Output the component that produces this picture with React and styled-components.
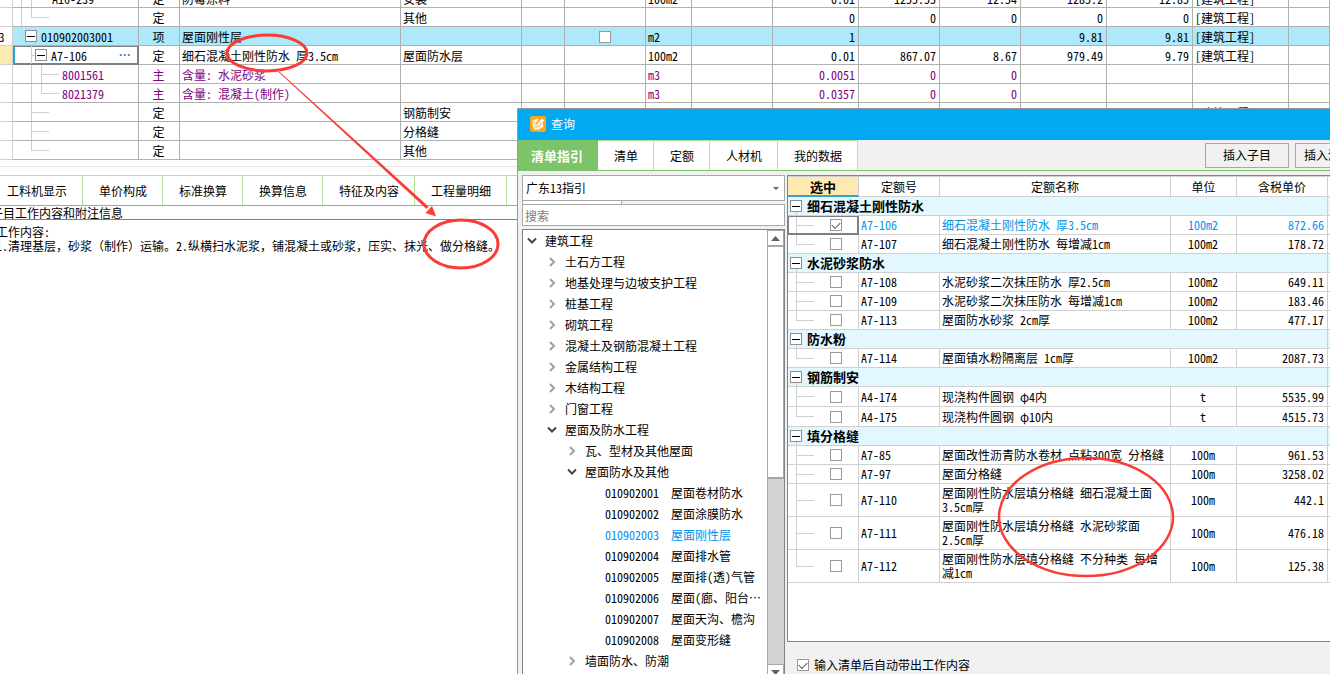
import React from "react";
import styled, { createGlobalStyle, css } from "styled-components";

const estimateColumns = [22, 126, 41, 221, 121, 43, 81, 46, 81, 86, 81, 81, 86, 86, 96];

const estimateRows = [
  {
    guides: ["line", "branch"],
    code: "A16-239",
    type: "定",
    name: "防霉涂料",
    spec: "安装",
    unit: "100m2",
    values: ["0.01", "1255.55", "12.54", "1285.2", "12.85"],
    major: "[建筑工程]",
  },
  {
    guides: ["line", "lastBranch"],
    type: "定",
    spec: "其他",
    values: ["0", "0", "0", "0", "0"],
    major: "[建筑工程]",
  },
  {
    num: "3",
    guides: ["lastNode"],
    toggle: true,
    code: "010902003001",
    type: "项",
    name: "屋面刚性层",
    check: true,
    unit: "m2",
    values: ["1", "", "", "9.81", "9.81"],
    major: "[建筑工程]",
    tone: "item",
  },
  {
    guides: ["blank", "node"],
    toggle: true,
    code: "A7-106",
    type: "定",
    name: "细石混凝土刚性防水 厚3.5cm",
    spec: "屋面防水层",
    unit: "100m2",
    values: ["0.01", "867.07", "8.67", "979.49", "9.79"],
    major: "[建筑工程]",
    focused: true,
  },
  {
    guides: ["blank", "line", "branch"],
    code: "8001561",
    type: "主",
    name: "含量: 水泥砂浆",
    unit: "m3",
    values: ["0.0051", "0", "0", "", ""],
    tone: "material",
  },
  {
    guides: ["blank", "line", "lastBranch"],
    code: "8021379",
    type: "主",
    name: "含量: 混凝土(制作)",
    unit: "m3",
    values: ["0.0357", "0", "0", "", ""],
    tone: "material",
  },
  { guides: ["blank", "branch"], type: "定", spec: "钢筋制安", major: "[建筑工程]" },
  { guides: ["blank", "branch"], type: "定", spec: "分格缝" },
  { guides: ["blank", "lastBranch"], type: "定", spec: "其他" },
];

const detailTabs = ["工料机显示", "单价构成", "标准换算", "换算信息", "特征及内容", "工程量明细", ""];

const queryTabs = ["清单指引", "清单", "定额", "人材机", "我的数据"];

const chapters = [
  { depth: 0, state: "open", label: "建筑工程" },
  { depth: 1, state: "closed", label: "土石方工程" },
  { depth: 1, state: "closed", label: "地基处理与边坡支护工程" },
  { depth: 1, state: "closed", label: "桩基工程" },
  { depth: 1, state: "closed", label: "砌筑工程" },
  { depth: 1, state: "closed", label: "混凝土及钢筋混凝土工程" },
  { depth: 1, state: "closed", label: "金属结构工程" },
  { depth: 1, state: "closed", label: "木结构工程" },
  { depth: 1, state: "closed", label: "门窗工程" },
  { depth: 1, state: "open", label: "屋面及防水工程" },
  { depth: 2, state: "closed", label: "瓦、型材及其他屋面" },
  { depth: 2, state: "open", label: "屋面防水及其他" },
  { depth: 3, code: "010902001", label: "屋面卷材防水" },
  { depth: 3, code: "010902002", label: "屋面涂膜防水" },
  { depth: 3, code: "010902003", label: "屋面刚性层", selected: true },
  { depth: 3, code: "010902004", label: "屋面排水管" },
  { depth: 3, code: "010902005", label: "屋面排(透)气管" },
  { depth: 3, code: "010902006", label: "屋面(廊、阳台…" },
  { depth: 3, code: "010902007", label: "屋面天沟、檐沟" },
  { depth: 3, code: "010902008", label: "屋面变形缝" },
  { depth: 2, state: "closed", label: "墙面防水、防潮" },
];

const quotaGroups = [
  {
    title: "细石混凝土刚性防水",
    items: [
      { code: "A7-106", name: "细石混凝土刚性防水 厚3.5cm", unit: "100m2", price: "872.66", picked: true },
      { code: "A7-107", name: "细石混凝土刚性防水 每增减1cm", unit: "100m2", price: "178.72" },
    ],
  },
  {
    title: "水泥砂浆防水",
    items: [
      { code: "A7-108", name: "水泥砂浆二次抹压防水 厚2.5cm", unit: "100m2", price: "649.11" },
      { code: "A7-109", name: "水泥砂浆二次抹压防水 每增减1cm", unit: "100m2", price: "183.46" },
      { code: "A7-113", name: "屋面防水砂浆 2cm厚", unit: "100m2", price: "477.17" },
    ],
  },
  {
    title: "防水粉",
    items: [{ code: "A7-114", name: "屋面镇水粉隔离层 1cm厚", unit: "100m2", price: "2087.73" }],
  },
  {
    title: "钢筋制安",
    items: [
      { code: "A4-174", name: "现浇构件圆钢 φ4内", unit: "t", price: "5535.99", tall: true },
      { code: "A4-175", name: "现浇构件圆钢 φ10内", unit: "t", price: "4515.73", tall: true },
    ],
  },
  {
    title: "填分格缝",
    items: [
      { code: "A7-85", name: "屋面改性沥青防水卷材 点粘300宽 分格缝", unit: "100m", price: "961.53" },
      { code: "A7-97", name: "屋面分格缝", unit: "100m", price: "3258.02" },
      { code: "A7-110", name: "屋面刚性防水层填分格缝 细石混凝土面 3.5cm厚", unit: "100m", price: "442.1" },
      { code: "A7-111", name: "屋面刚性防水层填分格缝 水泥砂浆面 2.5cm厚", unit: "100m", price: "476.18" },
      { code: "A7-112", name: "屋面刚性防水层填分格缝 不分种类 每增减1cm", unit: "100m", price: "125.38" },
    ],
  },
];

const AppIcon = () => (
  <svg width="16" height="16" viewBox="0 0 16 16" aria-hidden="true">
    <rect width="16" height="16" rx="2" fill="#fba51c" />
    <path d="M2 5 7 2.500 9 3.500 5.500 7.500 6 10 9 9.500 12.500 6.500 13.500 10.500 9 13.500 4.500 14 2.500 10z" fill="#fff6e6" />
    <path d="M6.500 8.500 12 2.500 14.500 4.500 9 9.300 6.300 10z" fill="#fff" />
    <path d="M2.500 5.500 5.500 7M9.500 5.500 11.500 7.200M4 10.500c2.500 1 5 .5 7.500-1.500" fill="none" stroke="#f6a63a" strokeWidth=".8" />
  </svg>
);

const Chevron = ({ state }) => (
  <svg width="10" height="10" viewBox="0 0 10 10" fill="none" aria-hidden="true">
    {state === "open" ? (
      <path d="M1 2.500 5 6.500 9 2.500" stroke="#454545" strokeWidth="2" />
    ) : (
      <path d="M3 1 7 5 3 9" stroke="#a0a0a0" strokeWidth="2" />
    )}
  </svg>
);

const Triangle = ({ down, small }) => (
  <svg width={small ? 6 : 9} height={small ? 3 : 5} viewBox="0 0 10 5" preserveAspectRatio="none" aria-hidden="true">
    <path d={down ? "M0 0h10L5 5z" : "M0 5h10L5 0z"} fill="#5c6370" />
  </svg>
);

const EstimateGrid = () => (
  <GridPane>
    <GridTable>
      <colgroup>
        {estimateColumns.map((w, i) => (
          <Col key={i} $w={w} />
        ))}
        <col />
      </colgroup>
      <tbody>
        {estimateRows.map((row, i) => (
          <GridRow key={i} $tone={row.tone}>
            <RowNumber $active={row.focused}>{row.num}</RowNumber>
            <GridCell $focused={row.focused} $flush>
              <CodeLine>
                {row.guides.map((g, n) => (
                  <Guide key={n} $kind={g} />
                ))}
                {row.toggle && <Toggle aria-label="折叠" />}
                <CodeText>{row.code}</CodeText>
                {row.focused && <MoreButton aria-label="更多">···</MoreButton>}
              </CodeLine>
            </GridCell>
            <GridCell $align="center">{row.type}</GridCell>
            <GridCell>{row.name}</GridCell>
            <GridCell>{row.spec}</GridCell>
            <GridCell />
            <GridCell>{row.check && <CheckBox aria-label={row.name} />}</GridCell>
            <GridCell>{row.unit}</GridCell>
            <GridCell />
            {(row.values || ["", "", "", "", ""]).map((v, n) => (
              <GridCell key={n} $align="right">
                {v}
              </GridCell>
            ))}
            <GridCell>{row.major}</GridCell>
            <GridCell />
          </GridRow>
        ))}
      </tbody>
    </GridTable>
  </GridPane>
);

const DetailPane = () => (
  <Detail>
    <DetailTabs>
      {detailTabs.map((t, i) => (
        <Tab key={i}>{t}</Tab>
      ))}
    </DetailTabs>
    <DetailTitle>子目工作内容和附注信息</DetailTitle>
    <DetailBody>
      工作内容:
      <br />
      1.清理基层，砂浆（制作）运输。2.纵横扫水泥浆，铺混凝土或砂浆，压实、抹光、做分格缝。
    </DetailBody>
  </Detail>
);

const GuidePanel = () => (
  <Side>
    <SelectBox>
      <Select aria-label="指引库" defaultValue="gd13">
        <option value="gd13">广东13指引</option>
      </Select>
      <Triangle down small />
    </SelectBox>
    <Splitter />
    <SearchInput type="text" placeholder="搜索" aria-label="搜索" />
    <TreeBox>
      <TreeList>
        {chapters.map((c) => (
          <TreeItem key={c.label} $depth={c.depth} $selected={c.selected}>
            {c.state && <Chevron state={c.state} />}
            {c.code && <span>{c.code}</span>}
            <span>{c.label}</span>
          </TreeItem>
        ))}
      </TreeList>
      <ScrollBar>
        <ScrollButton aria-label="向上">
          <Triangle />
        </ScrollButton>
        <ScrollThumb />
        <ScrollTrack />
        <ScrollButton aria-label="向下">
          <Triangle down />
        </ScrollButton>
      </ScrollBar>
    </TreeBox>
  </Side>
);

const QuotaTable = () => (
  <QuotaBox>
    <Quota>
      <colgroup>
        <Col $w={71} />
        <Col $w={81} />
        <Col $w={231} />
        <Col $w={66} />
        <Col $w={91} />
        <col />
      </colgroup>
      <thead>
        <tr>
          <HeadCell $active>选中</HeadCell>
          <HeadCell>定额号</HeadCell>
          <HeadCell>定额名称</HeadCell>
          <HeadCell>单位</HeadCell>
          <HeadCell>含税单价</HeadCell>
          <HeadCell />
        </tr>
      </thead>
      {quotaGroups.map((group) => (
        <tbody key={group.title}>
          <tr>
            <GroupCell colSpan={5} $node>
              <GroupTitle>
                <Toggle aria-label="折叠" />
                {group.title}
              </GroupTitle>
            </GroupCell>
            <GroupCell />
          </tr>
          {group.items.map((item, i) => (
            <QuotaRow key={item.code} $picked={item.picked} $tall={item.tall}>
              <PickCell $last={i === group.items.length - 1} $focused={item.picked}>
                <CheckBox defaultChecked={item.picked} aria-label={item.code} />
              </PickCell>
              <QuotaCell>{item.code}</QuotaCell>
              <QuotaCell>{item.name}</QuotaCell>
              <QuotaCell $align="center">{item.unit}</QuotaCell>
              <QuotaCell $align="right">{item.price}</QuotaCell>
              <QuotaCell />
            </QuotaRow>
          ))}
        </tbody>
      ))}
    </Quota>
  </QuotaBox>
);

const QueryDialog = () => (
  <Dialog role="dialog" aria-label="查询">
    <TitleBar>
      <AppIcon />
      查询
    </TitleBar>
    <ToolBar>
      {queryTabs.map((t, i) => (
        <Tab key={t} $active={i === 0}>
          {t}
        </Tab>
      ))}
      <Actions>
        <ActionButton $wide>插入子目</ActionButton>
        <ActionButton>插入清单</ActionButton>
      </Actions>
    </ToolBar>
    <DialogBody>
      <GuidePanel />
      <Main>
        <QuotaTable />
        <Footer>
          <FooterLabel>
            <CheckBox defaultChecked />
            输入清单后自动带出工作内容
          </FooterLabel>
        </Footer>
      </Main>
    </DialogBody>
  </Dialog>
);

const Marks = () => (
  <MarkLayer aria-hidden="true">
    <g fill="none" stroke="#fa3c37" strokeWidth="3">
      <ellipse cx="267" cy="53" rx="40" ry="18" />
      <ellipse cx="461" cy="244" rx="37" ry="24" />
      <ellipse cx="1086" cy="517" rx="87" ry="59" strokeWidth="2.500" />
    </g>
    <path d="M278.500 72 279.300 71.400 428.500 206.500 426.500 209z" fill="#fa3c37" />
    <path d="M436 216.500 425.500 213 432 206z" fill="#fa3c37" />
  </MarkLayer>
);

const App = () => (
  <Screen>
    <GlobalStyle />
    <Workspace>
      <EstimateGrid />
      <DetailPane />
    </Workspace>
    <QueryDialog />
    <Marks />
  </Screen>
);

const GlobalStyle = createGlobalStyle`
  * {
    box-sizing: border-box;
  }
  body {
    margin: 0;
    background: #fff;
  }
  body, button, input, select {
    font-family: "Noto Sans Mono CJK SC", "Noto Sans CJK SC", monospace;
    font-size: 12px;
    line-height: 14px;
    color: #000;
  }
`;

const Screen = styled.div`
  position: relative;
  height: 100vh;
  overflow: hidden;
`;

/* the main window is scrolled a little to the left */
const Workspace = styled.div`
  margin-left: -9px;
`;

const Col = styled.col`
  width: ${(props) => props.$w}px;
`;

const GridPane = styled.div`
  display: flex;
  align-items: flex-end;
  height: 160px;
  overflow: hidden;
`;

const GridTable = styled.table`
  width: 100%;
  table-layout: fixed;
  border-spacing: 0;
`;

const rowTones = {
  item: css`
    background: #ade8fb;
  `,
  material: css`
    color: #800080;
  `,
};

const GridRow = styled.tr`
  ${(props) => rowTones[props.$tone]}
`;

const GridCell = styled.td`
  height: 19px;
  padding: ${(props) => (props.$flush ? "0" : "3px 3px 1px 2px")};
  border-right: 1px solid #b0b0b0;
  border-bottom: 1px solid #b0b0b0;
  text-align: ${(props) => props.$align || "left"};
  white-space: nowrap;
  ${(props) =>
    props.$focused &&
    css`
      box-shadow: inset 0 0 0 1px #808080, inset 2px 0 0 #2fa5d6;
      border-color: #808080;
    `}
`;

const RowNumber = styled.td`
  padding: 2px 0 0;
  border-right: 1px solid #d0d0d0;
  border-bottom: 1px solid #d0d0d0;
  background: ${(props) => (props.$active ? "#feeab0" : "#fff")};
  text-align: center;
`;

const CodeLine = styled.div`
  display: flex;
  align-items: center;
  height: 18px;
  padding-left: 3px;
`;

const guideShapes = {
  blank: { w: 10, v: "0", h: "0" },
  line: { w: 10, v: "100%", h: "0" },
  node: { w: 9, v: "100%", h: "4px" },
  lastNode: { w: 9, v: "50%", h: "4px" },
  branch: { w: 26, v: "100%", h: "18px" },
  lastBranch: { w: 26, v: "50%", h: "18px" },
};

const guideInk = "linear-gradient(#cfcfcf, #cfcfcf)";

const Guide = styled.span`
  flex: none;
  align-self: stretch;
  width: ${(props) => guideShapes[props.$kind].w}px;
  background: ${guideInk} 5px 0 / 1px ${(props) => guideShapes[props.$kind].v} no-repeat,
    ${guideInk} 5px 50% / ${(props) => guideShapes[props.$kind].h} 1px no-repeat;
`;

const Toggle = styled.button`
  display: flex;
  flex: none;
  align-items: center;
  justify-content: center;
  width: 12px;
  height: 12px;
  padding: 0;
  border: 1px solid #8f8f8f;
  background: #fff;

  &::before {
    content: "";
    width: 8px;
    height: 1px;
    background: #000;
  }
`;

const CodeText = styled.span`
  flex: 1;
  padding-top: 2px;

  ${Toggle} + & {
    margin-left: 4px;
  }
`;

const MoreButton = styled.button`
  padding: 0 7px;
  border: 0;
  background: none;
  color: #1f86c9;
  font-family: "Liberation Sans", sans-serif;
  font-weight: bold;
`;

const CheckBox = styled.input.attrs({ type: "checkbox" })`
  appearance: none;
  display: grid;
  place-items: center;
  width: 12px;
  height: 12px;
  margin: 0 auto;
  border: 1px solid #999;
  background: #fff;

  &:checked::before {
    content: "";
    width: 7px;
    height: 4px;
    border-left: 1px solid #555;
    border-bottom: 1px solid #555;
    transform: translateY(-1px) rotate(-45deg);
  }
`;

const Detail = styled.section`
  margin-top: 6px;
  border-top: 1px solid #e4e4e4;
  padding-top: 8px;
`;

const DetailTabs = styled.nav`
  display: flex;
  height: 31px;
  border-bottom: 1px solid #7dc36a;
`;

const Tab = styled.button`
  padding: 0 15px 0 16px;
  border: 0;
  border-top: 1px solid #b4e39b;
  border-right: 1px solid #b4e39b;
  background: #fff;
  white-space: nowrap;
  ${(props) =>
    props.$active &&
    css`
      padding: 0 14px 0 13px;
      border-color: #7dc36a;
      background: #7dc36a;
      color: #fff;
      font-size: 13px;
      font-weight: bold;
    `}

  ${DetailTabs} &:last-child {
    flex: 1;
  }
`;

const DetailTitle = styled.div`
  border-bottom: 1px solid #808080;
  line-height: 13px;
`;

const DetailBody = styled.div`
  padding: 5px;
  white-space: nowrap;
`;

const Dialog = styled.section`
  position: absolute;
  top: 108px;
  right: -60px;
  bottom: -20px;
  left: 517px;
  display: flex;
  flex-direction: column;
  border: 1px solid #9b9b9b;
  background: #f1f1f1;
`;

const TitleBar = styled.header`
  display: flex;
  align-items: center;
  gap: 5px;
  height: 31px;
  padding: 0 12px 2px;
  background: #00a9f2;
  color: #fff;
`;

const ToolBar = styled.div`
  display: flex;
  height: 31px;
  border-bottom: 1px solid #7dc36a;
`;

const Actions = styled.div`
  display: flex;
  align-items: center;
  gap: 6px;
  margin-left: auto;
  padding-right: 28px;
`;

const ActionButton = styled.button`
  height: 25px;
  padding: 0 ${(props) => (props.$wide ? "17px" : "8px")};
  border: 1px solid #a8a8a8;
  background: #f1f1f1;
  white-space: nowrap;
`;

const DialogBody = styled.div`
  display: flex;
  flex: 1;
  gap: 2px;
  min-height: 0;
  padding: 4px 0 11px 4px;
`;

const Side = styled.aside`
  display: flex;
  flex: none;
  flex-direction: column;
  width: 263px;
`;

const SelectBox = styled.div`
  display: grid;
  align-items: center;
  border: 1px solid #a8a8a8;
  background: #fff;

  > * {
    grid-area: 1 / 1;
  }
  > svg {
    justify-self: end;
    margin-right: 5px;
    pointer-events: none;
  }
`;

const Select = styled.select`
  appearance: none;
  height: 24px;
  padding: 0 3px;
  border: 0;
  background: none;
`;

const Splitter = styled.div`
  width: 100px;
  height: 3px;
  border-right: 1px solid #a8a8a8;
  border-left: 1px solid #a8a8a8;
  background: #fff;
`;

const SearchInput = styled.input`
  height: 22px;
  padding: 0 2px;
  border: 1px solid #a8a8a8;
  background: #fff;

  &::placeholder {
    color: #7d7d7d;
  }
`;

const TreeBox = styled.div`
  display: flex;
  flex: 1;
  min-height: 0;
  margin-top: 3px;
  border: 1px solid #80848c;
  background: #fff;
`;

const TreeList = styled.ul`
  flex: 1;
  min-width: 0;
  margin: 0;
  padding: 0;
  overflow: hidden;
  list-style: none;
`;

const TreeItem = styled.li`
  display: flex;
  align-items: center;
  gap: ${(props) => (props.$depth === 3 ? 12 : 8)}px;
  height: 21px;
  padding-left: ${(props) => [4, 24, 44, 82][props.$depth]}px;
  color: ${(props) => (props.$selected ? "#0091ea" : "#000")};
  white-space: nowrap;
`;

const ScrollBar = styled.div`
  display: flex;
  flex-direction: column;
  width: 17px;
  border-left: 1px solid #a8a8a8;
`;

const ScrollButton = styled.button`
  display: flex;
  flex: none;
  align-items: center;
  justify-content: center;
  height: 17px;
  padding: 0;
  border: solid #a8a8a8;
  border-width: 1px 1px 2px 0;
  background: #fff;
`;

const ScrollThumb = styled.div`
  flex: none;
  height: 232px;
  border: solid #a8a8a8;
  border-width: 0 1px 2px 0;
  background: #fff;
`;

const ScrollTrack = styled.div`
  flex: 1;
  background: #d4d4d4;
`;

const Main = styled.div`
  display: flex;
  flex: 1;
  flex-direction: column;
  min-width: 0;
`;

const QuotaBox = styled.div`
  flex: 1;
  border: 1px solid #80848c;
  background: #fff;
`;

const Quota = styled.table`
  width: 100%;
  table-layout: fixed;
  border-spacing: 0;
`;

const HeadCell = styled.th`
  height: 21px;
  padding: 3px 0 2px;
  border-top: 1px solid #d0d0d0;
  border-right: 1px solid #d0d0d0;
  border-bottom: 1px solid #d0d0d0;
  font-weight: normal;
  ${(props) =>
    props.$active &&
    css`
      padding-bottom: 1px;
      border-bottom: 2px solid #35a3d2;
      background: #feeab0;
      font-size: 13px;
      font-weight: bold;
    `}
`;

const GroupCell = styled.td`
  padding: 0 2px;
  border-right: 1px solid #d0d0d0;
  border-bottom: 1px solid #d0d0d0;
  background: ${(props) => props.$node && `${guideInk} 8px 100% / 1px 3px no-repeat`} #e3f7ff;
`;

const GroupTitle = styled.div`
  display: flex;
  align-items: center;
  gap: 5px;
  height: 18px;
  font-size: 13px;
  font-weight: bold;
`;

const QuotaRow = styled.tr`
  height: ${(props) => (props.$tall ? 20 : 19)}px;
  color: ${(props) => (props.$picked ? "#0095e8" : "#000")};
`;

const QuotaCell = styled.td`
  padding: 2px 3px 2px 2px;
  border-right: 1px solid #d0d0d0;
  border-bottom: 1px solid #d0d0d0;
  text-align: ${(props) => props.$align || "left"};
`;

const PickCell = styled.td`
  padding: 0 0 0 26px;
  border-right: 1px solid #d0d0d0;
  border-bottom: 1px solid #d0d0d0;
  background: ${guideInk} 8px 0 / 1px ${(props) => (props.$last ? "50%" : "100%")} no-repeat,
    ${guideInk} 8px 50% / 18px 1px no-repeat;
  ${(props) =>
    props.$focused &&
    css`
      border-color: #808080;
      box-shadow: inset 0 0 0 1px #808080;
    `}
`;

const Footer = styled.footer`
  height: 40px;
  padding: 16px 10px 0;
`;

const FooterLabel = styled.label`
  display: flex;
  align-items: center;
  gap: 5px;

  > input {
    margin: 0;
  }
`;

const MarkLayer = styled.svg`
  position: absolute;
  top: 0;
  left: 0;
  width: 100%;
  height: 100%;
  pointer-events: none;
`;

export default App;
